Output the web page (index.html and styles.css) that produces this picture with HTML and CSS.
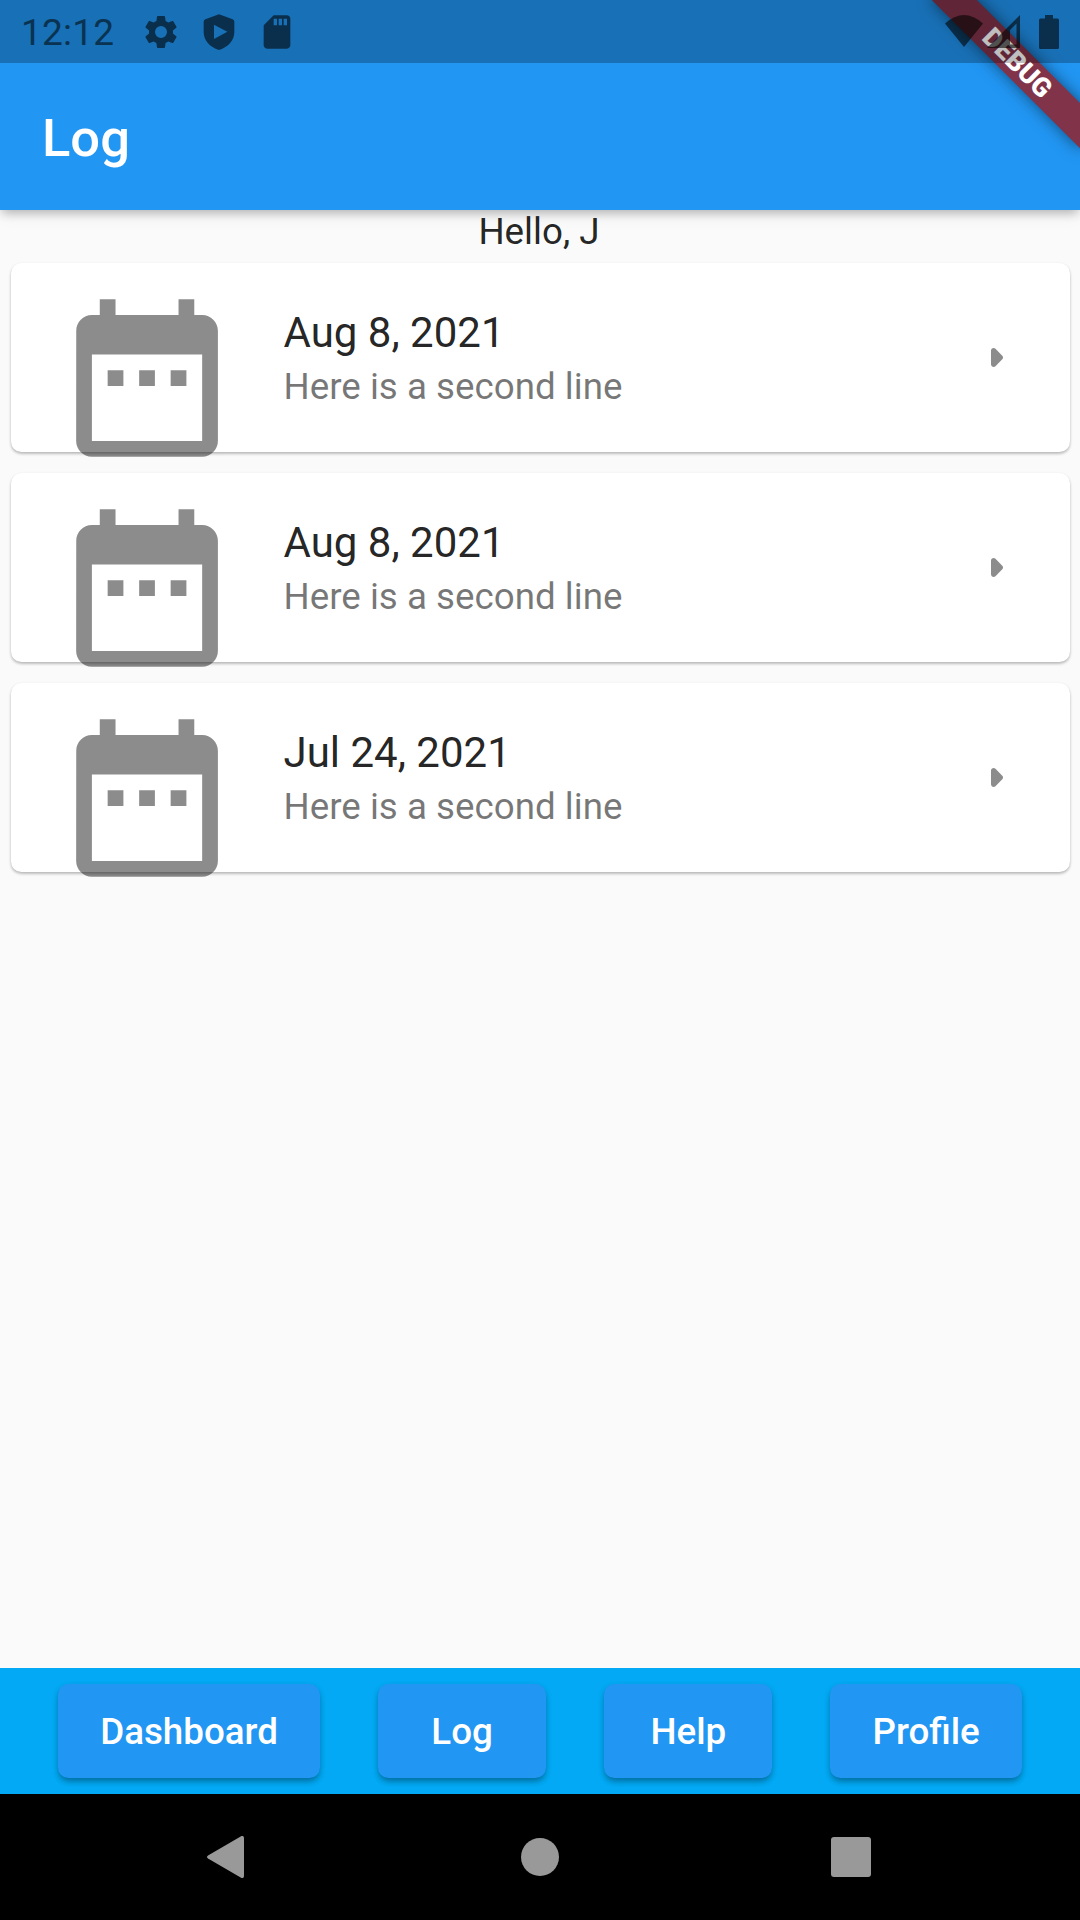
FILE: index.html
```html
<!DOCTYPE html>
<html lang="en">
<head>
    <meta charset="UTF-8">
    <meta name="viewport" content="width=device-width, initial-scale=1.0">
    <title>Log</title>
    <link rel="stylesheet" href="styles.css">
</head>
<body>
    <header class="top">
        <div class="statusbar">
            <span class="time">12:12</span>
            <div class="status-left">
                <svg class="s-icon" viewBox="0 0 24 24"><path d="M19.14 12.94c.04-.3.06-.61.06-.94s-.02-.64-.07-.94l2.03-1.58a.49.49 0 0 0 .12-.61l-1.92-3.32a.49.49 0 0 0-.59-.22l-2.39.96a7.03 7.03 0 0 0-1.62-.94l-.36-2.54a.48.48 0 0 0-.48-.41h-3.84a.47.47 0 0 0-.47.41l-.36 2.54c-.59.24-1.13.57-1.62.94l-2.39-.96a.48.48 0 0 0-.59.22L2.74 8.87a.47.47 0 0 0 .12.61l2.03 1.58c-.05.3-.09.63-.09.94s.02.64.07.94l-2.03 1.58a.49.49 0 0 0-.12.61l1.92 3.32c.12.22.37.29.59.22l2.39-.96c.5.38 1.03.7 1.62.94l.36 2.54c.05.24.24.41.48.41h3.84c.24 0 .44-.17.47-.41l.36-2.54c.59-.24 1.13-.56 1.62-.94l2.39.96c.22.08.47 0 .59-.22l1.92-3.32a.47.47 0 0 0-.12-.61zM12 15.6A3.6 3.6 0 1 1 12 8.4a3.6 3.6 0 0 1 0 7.2z"/></svg>
                <svg class="s-icon" viewBox="0 0 24 24"><path fill-rule="evenodd" d="M12 1.3 3.8 4.4Q2.8 4.8 2.8 5.8V12c0 5 3.6 9 9.2 10.8 5.6-1.8 9.2-5.8 9.2-10.8V5.8q0-1-1-1.4zM9 7.6v8.6l8-4.3z"/></svg>
                <svg class="s-icon" viewBox="0 0 24 24"><path d="M18 2h-8L4.02 8 4 20c0 1.1.9 2 2 2h12c1.1 0 2-.9 2-2V4c0-1.1-.9-2-2-2zm-6 6h-2V4h2v4zm3 0h-2V4h2v4zm3 0h-2V4h2v4z"/></svg>
            </div>
            <div class="status-right">
                <svg class="wifi" viewBox="0 0 38 34"><path d="M0 8.5Q19-8.5 38 8.5L19 32z"/></svg>
                <svg class="signal" viewBox="0 0 34 34"><path fill-rule="evenodd" d="M34 0v33H1zM30.5 8.500 24 15v14.500h6.500z"/></svg>
                <svg class="battery" viewBox="0 0 20 34"><path d="M6 0h8v3.500h4.500q1.500 0 1.500 1.500v27.500q0 1.500-1.500 1.500h-17Q0 34 0 32.500V5q0-1.500 1.500-1.500H6z"/></svg>
            </div>
        </div>
        <div class="appbar">
            <h1>Log</h1>
        </div>
        <div class="banner">DEBUG</div>
    </header>

    <main>
        <p class="hello">Hello, J</p>
        <section class="card">
            <svg class="calendar" viewBox="0.06 0.06 24 24"><path d="M9 11H7v2h2v-2zm4 0h-2v2h2v-2zm4 0h-2v2h2v-2zm2-7h-1V2h-2v2H8V2H6v2H5c-1.11 0-1.99.9-1.99 2L3 20c0 1.1.89 2 2 2h14c1.1 0 2-.9 2-2V6c0-1.1-.9-2-2-2zm0 16H5V9h14v11z"/></svg>
            <div class="info">
                <p class="date">Aug 8, 2021</p>
                <p class="line">Here is a second line</p>
            </div>
            <svg class="arrow" viewBox="0.1 0 24 24"><path d="M11.71 15.29l2.59-2.59c.39-.39.39-1.02 0-1.41L11.71 8.7c-.63-.62-1.71-.18-1.71.71v5.17c0 .9 1.08 1.34 1.71.71z"/></svg>
        </section>
        <section class="card">
            <svg class="calendar" viewBox="0.06 0.06 24 24"><path d="M9 11H7v2h2v-2zm4 0h-2v2h2v-2zm4 0h-2v2h2v-2zm2-7h-1V2h-2v2H8V2H6v2H5c-1.11 0-1.99.9-1.99 2L3 20c0 1.1.89 2 2 2h14c1.1 0 2-.9 2-2V6c0-1.1-.9-2-2-2zm0 16H5V9h14v11z"/></svg>
            <div class="info">
                <p class="date">Aug 8, 2021</p>
                <p class="line">Here is a second line</p>
            </div>
            <svg class="arrow" viewBox="0.1 0 24 24"><path d="M11.71 15.29l2.59-2.59c.39-.39.39-1.02 0-1.41L11.71 8.7c-.63-.62-1.71-.18-1.71.71v5.17c0 .9 1.08 1.34 1.71.71z"/></svg>
        </section>
        <section class="card">
            <svg class="calendar" viewBox="0.06 0.06 24 24"><path d="M9 11H7v2h2v-2zm4 0h-2v2h2v-2zm4 0h-2v2h2v-2zm2-7h-1V2h-2v2H8V2H6v2H5c-1.11 0-1.99.9-1.99 2L3 20c0 1.1.89 2 2 2h14c1.1 0 2-.9 2-2V6c0-1.1-.9-2-2-2zm0 16H5V9h14v11z"/></svg>
            <div class="info">
                <p class="date">Jul 24, 2021</p>
                <p class="line">Here is a second line</p>
            </div>
            <svg class="arrow" viewBox="0.1 0 24 24"><path d="M11.71 15.29l2.59-2.59c.39-.39.39-1.02 0-1.41L11.71 8.7c-.63-.62-1.71-.18-1.71.71v5.17c0 .9 1.08 1.34 1.71.71z"/></svg>
        </section>
    </main>

    <nav class="tabs">
        <button class="btn">Dashboard</button>
        <button class="btn">Log</button>
        <button class="btn">Help</button>
        <button class="btn">Profile</button>
    </nav>

    <footer class="android-nav">
        <svg class="nav-icon" viewBox="0 0 42 42"><path d="M36.500 0q2.500-.5 2.500 2v38q0 2.500-2.500 2L3 22.500q-2-1.500 0-3z"/></svg>
        <svg class="nav-icon" viewBox="0 0 42 42"><circle cx="22" cy="21" r="19"/></svg>
        <svg class="nav-icon" viewBox="0 0 42 42"><rect x="1" y="1" width="40" height="40" rx="3"/></svg>
    </footer>
</body>
</html>
```
FILE: styles.css
```css
*{
    margin: 0;
    padding: 0;
    box-sizing: border-box;
}
body{
    height: 1920px;
    display: flex;
    flex-direction: column;
    background-color: #fafafa;
    font-family: Roboto, sans-serif;
    color: rgba(0, 0, 0, 0.87);
    overflow: hidden;
}
svg{
    display: block;
    flex-shrink: 0;
}

/* top */
.top{
    position: relative;
    height: 210px;
    background-color: #2196f3;
    box-shadow: 0 5px 10px -3px rgba(0, 0, 0, 0.2), 0 10px 13px rgba(0, 0, 0, 0.03), 0 3px 10px rgba(0, 0, 0, 0.1);
}
.statusbar{
    position: relative;
    z-index: 2;
    height: 63px;
    display: flex;
    align-items: center;
    padding: 0 21px 0 21px;
    background-color: rgba(0, 0, 0, 0.25);
    color: #0a3352;
    fill: rgba(0, 0, 0, 0.58);
}
.time{
    width: 120px;
    font-size: 37px;
    line-height: 63px;
    letter-spacing: 0.2px;
    padding-top: 2px;
}
.status-left{
    display: flex;
    gap: 18px;
}
.s-icon{
    width: 40px;
    height: 40px;
}
.status-right{
    display: flex;
    align-items: center;
    margin-left: auto;
}
.wifi{
    width: 38px;
    height: 34px;
}
.signal{
    width: 34px;
    height: 34px;
    margin: 0 19px 0 3px;
}
.battery{
    width: 20px;
    height: 34px;
}
.appbar{
    height: 147px;
    display: flex;
    align-items: center;
    padding: 2px 0 0 42px;
    color: white;
}
.appbar h1{
    font-size: 52.5px;
    font-weight: 500;
}
/* corner ribbon */
.banner{
    position: absolute;
    top: 72.7px;
    right: -105px;
    width: 210px;
    height: 31.5px;
    transform: rotate(45deg);
    transform-origin: 105px -72.7px;
    background-color: #81334a;
    box-shadow: 0 0 16px rgba(0, 0, 0, 0.5);
    color: white;
    font-size: 26.775px;
    font-weight: 900;
    line-height: 32.5px;
    text-align: center;
}

/* list */
main{
    flex: 1;
}
.hello{
    height: 42px;
    padding-right: 2px;
    font-size: 36.75px;
    line-height: 43px;
    text-align: center;
}
.card{
    height: 189px;
    margin: 10.5px 10.5px 21px;
    padding: 0 42px;
    display: flex;
    align-items: center;
    background-color: white;
    border-radius: 10.5px;
    box-shadow: 0 2px 3px rgba(0, 0, 0, 0.2), 0 1px 3px rgba(0, 0, 0, 0.1);
}
.calendar{
    width: 189px;
    height: 189px;
    align-self: flex-start;
    margin-top: 21px;
    fill: rgba(0, 0, 0, 0.45);
}
.info{
    flex: 1;
    margin-left: 42px;
    padding-top: 6px;
}
.date{
    font-size: 42px;
    line-height: 52px;
}
.line{
    font-size: 36.75px;
    line-height: 55px;
    color: rgba(0, 0, 0, 0.54);
}
.arrow{
    width: 63px;
    height: 63px;
    fill: rgba(0, 0, 0, 0.45);
}

/* bottom */
.tabs{
    height: 126px;
    display: flex;
    justify-content: space-evenly;
    align-items: center;
    background-color: #03a9f4;
}
.btn{
    min-width: 168px;
    height: 94.5px;
    padding: 0 42px;
    border: none;
    border-radius: 10.5px;
    background-color: #2196f3;
    box-shadow: 0 5px 6px -2px rgba(0, 0, 0, 0.2), 0 3px 6px rgba(0, 0, 0, 0.2);
    color: white;
    font-family: inherit;
    font-size: 36.75px;
    font-weight: 500;
}
.android-nav{
    height: 126px;
    display: flex;
    justify-content: space-between;
    align-items: center;
    padding: 0 208px 0 205px;
    background-color: black;
    fill: #999;
}
.nav-icon{
    width: 42px;
    height: 42px;
}
```
